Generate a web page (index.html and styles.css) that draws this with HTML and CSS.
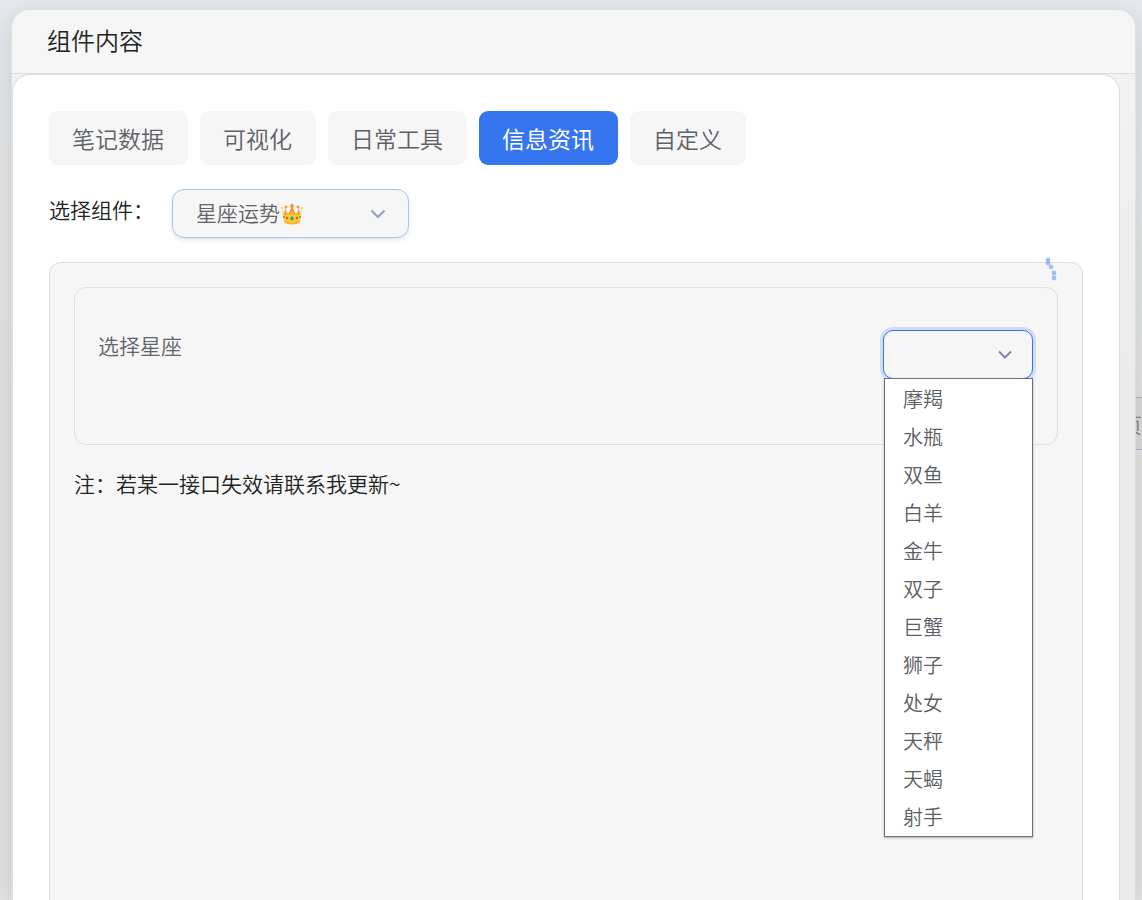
FILE: index.html
```html
<!DOCTYPE html>
<html lang="zh-CN">
<head>
    <meta charset="UTF-8">
    <meta name="viewport" content="width=device-width, initial-scale=1.0">
    <title>组件内容</title>
    <link rel="stylesheet" href="styles.css">
</head>
<body>
    <button class="page-button" type="button">页</button>

    <div class="dialog">
        <header class="dialog-header">组件内容</header>
        <div class="dialog-body">
            <main class="content">
                <nav class="tabs">
                    <button class="tab" type="button">笔记数据</button>
                    <button class="tab" type="button">可视化</button>
                    <button class="tab" type="button">日常工具</button>
                    <button class="tab active" type="button">信息资讯</button>
                    <button class="tab" type="button">自定义</button>
                </nav>

                <div class="field">
                    <label class="field-label" for="widget">选择组件：</label>
                    <div class="select-box widget-box">
                        <select class="select" id="widget">
                            <option>星座运势</option>
                        </select>
                        <svg class="crown" viewBox="0 0 22 22" aria-hidden="true">
                            <path d="M4 5l3 8H3zM18 5l-3 8h4zM11 3l4 9H7z" fill="#f19534"/>
                            <path d="M1 6l3 7 3-4 2 4 2-6 2 6 2-4 3 4 3-7-2 13q-8 4-16 0z" fill="#ffca28"/>
                            <path d="M3 18q8 4 16 0l-1 2q-7 3-14 0z" fill="#fbb128"/>
                            <circle cx="1" cy="5" r="1" fill="#ffca28"/>
                            <circle cx="21" cy="5" r="1" fill="#ffca28"/>
                            <circle cx="5" cy="4" r="1.5" fill="#f19534"/>
                            <circle cx="17" cy="4" r="1.5" fill="#f19534"/>
                            <circle cx="11" cy="3" r="1.9" fill="#f19534"/>
                            <ellipse cx="11" cy="15.5" rx="1.7" ry="2.1" fill="#26a69a"/>
                            <circle cx="6" cy="15" r="1.2" fill="#f44336"/>
                            <circle cx="16" cy="15" r="1.2" fill="#f44336"/>
                            <circle cx="2.8" cy="14" r=".9" fill="#26a69a"/>
                            <circle cx="19.2" cy="14" r=".9" fill="#26a69a"/>
                        </svg>
                        <svg class="chevron" viewBox="0 0 16 10" aria-hidden="true">
                            <path d="M1.500 1.500l6.500 6.500 6.500-6.500"/>
                        </svg>
                    </div>
                </div>

                <section class="panel">
                    <svg class="spinner" viewBox="0 0 12 24" aria-hidden="true">
                        <circle cx="3" cy="3" r="2.4"/>
                        <circle cx="3" cy="6" r="2.4"/>
                        <circle cx="6" cy="10" r="2.4"/>
                        <circle cx="9" cy="16" r="2.4"/>
                        <circle cx="9" cy="21" r="2.4"/>
                    </svg>

                    <div class="card">
                        <label class="card-label" for="sign">选择星座</label>
                        <div class="select-box sign-box">
                            <select class="select focused" id="sign">
                                <option></option>
                            </select>
                            <svg class="chevron" viewBox="0 0 16 10" aria-hidden="true">
                                <path d="M2 1.500l6 6 6-6"/>
                            </svg>
                            <ul class="options" role="listbox" aria-label="选择星座">
                                <li role="option">摩羯</li>
                                <li role="option">水瓶</li>
                                <li role="option">双鱼</li>
                                <li role="option">白羊</li>
                                <li role="option">金牛</li>
                                <li role="option">双子</li>
                                <li role="option">巨蟹</li>
                                <li role="option">狮子</li>
                                <li role="option">处女</li>
                                <li role="option">天秤</li>
                                <li role="option">天蝎</li>
                                <li role="option">射手</li>
                            </ul>
                        </div>
                    </div>

                    <p class="note">注：若某一接口失效请联系我更新~</p>
                </section>
            </main>
        </div>
    </div>
</body>
</html>
```

FILE: styles.css
```css
* {
    box-sizing: border-box;
}
body {
    display: flex;
    height: 100vh;
    margin: 0;
    padding: 10px 6px 0 11px;
    overflow: hidden;
    background: linear-gradient(#e6eaf0, #e7e9ea 180px, #e6e6e6 400px);
    color: #222;
    font-family: "Noto Sans CJK SC", sans-serif;
    font-size: 21px;
    font-weight: 350;
}
button, select {
    font: inherit;
}
.page-button {
    position: absolute;
    top: 397px;
    right: 0;
    width: 60px;
    height: 53px;
    padding: 0;
    border: 1px solid #aab4cc;
    border-width: 1px 0;
    background: #dedede;
    color: #888;
    text-align: right;
}
.dialog {
    position: relative;
    display: flex;
    flex: 1;
    flex-direction: column;
    border: 1px solid #e0e0e0;
    border-width: 0 1px;
    border-radius: 18px 18px 0 0;
    background: #f6f6f6;
    box-shadow: 0 8px 32px rgba(0, 0, 0, 0.15);
}
.dialog-header {
    height: 64px;
    padding: 0 35px;
    border-bottom: 1px solid #dedede;
    font-size: 24px;
    line-height: 60px;
}
.dialog-body {
    display: flex;
    flex: 1;
    padding-right: 15px;
    background: linear-gradient(#f2f2f2, #ebebeb 300px);
}
.content {
    display: flex;
    flex: 1;
    flex-direction: column;
    padding: 36px 36px 0;
    border: 1px solid #dedede;
    border-bottom: 0;
    border-radius: 18px 18px 0 0;
    background: #fff;
}
.tabs {
    display: flex;
    gap: 12px;
    margin-bottom: 24px;
}
.tab {
    height: 54px;
    padding: 0 24px 1px 23px;
    border: 0;
    border-radius: 9px;
    background: #f6f6f6;
    color: #5f6167;
    font-size: 23px;
    cursor: pointer;
}
.tab.active {
    background: #3575f0;
    color: #fff;
    font-weight: 400;
}
.field {
    display: flex;
    gap: 18px;
    margin-bottom: 24px;
}
.field-label {
    line-height: 40px;
}
.select-box {
    position: relative;
    height: 49px;
}
.widget-box {
    width: 237px;
}
.sign-box {
    width: 150px;
}
.select {
    width: 100%;
    height: 100%;
    padding: 0 23px 3px;
    border: 1px solid #a9c3f5;
    border-radius: 12px;
    outline: 0;
    appearance: none;
    background: #f6f6f6;
    color: #626469;
    box-shadow: 0 2px 4px rgba(0, 0, 0, 0.1);
}
.select.focused {
    border-color: #3575f0;
    border-radius: 10px;
    box-shadow: 0 0 0 3px #cfddf6;
}
.chevron {
    position: absolute;
    top: 20px;
    right: 23px;
    width: 16px;
    height: 10px;
    fill: none;
    stroke: #8f9fc4;
    stroke-width: 2;
    pointer-events: none;
}
.sign-box .chevron {
    right: 20px;
    stroke: #7f86ad;
}
.crown {
    position: absolute;
    top: 14px;
    left: 109px;
    width: 22px;
    height: 22px;
    pointer-events: none;
}
.panel {
    position: relative;
    flex: 1;
    padding: 24px 24px 0;
    border: 1px solid #dedede;
    border-bottom: 0;
    border-radius: 12px 12px 0 0;
    background: #f6f6f6;
}
.spinner {
    position: absolute;
    top: -6px;
    right: 25px;
    width: 12px;
    height: 24px;
    fill: #8fb0f5;
    fill-opacity: 0.8;
}
.card {
    display: flex;
    justify-content: space-between;
    height: 158px;
    padding: 42px 24px 0 23px;
    border: 1px solid #dedede;
    border-radius: 12px;
}
.card-label {
    color: #626469;
    line-height: 30px;
}
.options {
    position: absolute;
    top: 48px;
    left: 1px;
    right: 0;
    margin: 0;
    padding: 1px 0 0;
    border: 1px solid #707070;
    background: #fff;
    box-shadow: 0 1px 2px rgba(0, 0, 0, 0.3);
    color: #5c5e62;
    font-size: 20px;
    line-height: 38px;
    list-style: none;
}
.options li {
    padding: 0 18px;
}
.note {
    margin: 24px 0 0;
    line-height: 28px;
}
```
